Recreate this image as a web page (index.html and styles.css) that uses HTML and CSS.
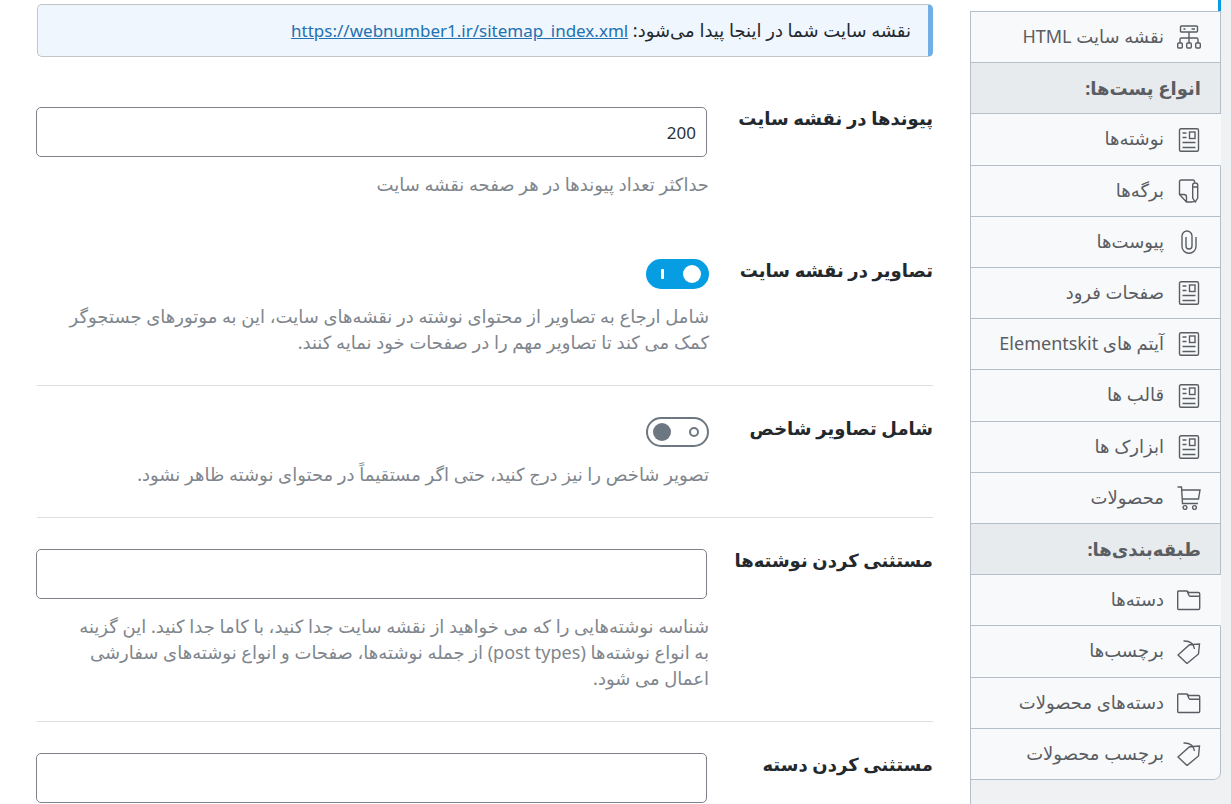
FILE: index.html
```html
<!DOCTYPE html>
<html lang="fa" dir="rtl">
<head>
<meta charset="utf-8">
<meta name="viewport" content="width=device-width, initial-scale=1">
<title>تنظیمات نقشه سایت</title>
<link rel="stylesheet" href="styles.css">
</head>
<body>
<svg class="sprite" aria-hidden="true">
  <symbol id="i-sitemap" viewBox="0 0 24 24"><rect x="3.500" y="1" width="17" height="6" rx="1"/><path d="M6.500 4h2M14.500 4h3.500M12 7v11M3 18v-3.500q0-1.500 1.500-1.500h15q1.500 0 1.500 1.500V18"/><rect x=".7" y="18" width="4.600" height="5" rx="1"/><rect x="9.700" y="18" width="4.600" height="5" rx="1"/><rect x="18.700" y="18" width="4.600" height="5" rx="1"/></symbol>
  <symbol id="i-post" viewBox="0 0 24 24"><rect x="2.500" y=".7" width="19" height="22.600" rx="1.500"/><rect x="12.500" y="4" width="5.500" height="6.500"/><path d="M5.500 5h4M5.500 9.500h4M5.500 14.500h13M5.500 19.500h13"/></symbol>
  <symbol id="i-page" viewBox="0 0 24 24"><path d="M17.500 3.500V2.500Q17.500 1 16 1H4.500q-2 0-2 2v12.500L9.500 23h5.500q1.500 0 2-1M2.500 15.500h4.500q2.500 0 2.500 2.500v5"/><path d="M15.700 6q0-2 2.500-2t2.500 2v13l-2.500 4-2.500-4zM15.700 8h5"/></symbol>
  <symbol id="i-clip" viewBox="0 0 24 24"><path d="M19 7v9.500a7 6.800 0 0 1-14 0V6a5 5 0 0 1 10 0v10a3 3 0 0 1-6 0V7"/></symbol>
  <symbol id="i-cart" viewBox="0 0 24 24"><path d="M.5 1h4l1 16.500h15.500M5 4h18l-1.500 9H5.500"/><circle cx="8" cy="21.500" r="1.900"/><circle cx="17.500" cy="21.500" r="1.900"/></symbol>
  <symbol id="i-folder" viewBox="0 0 24 24"><path d="M1.500 3H10l2 1.500h9.500q1.200 0 1.200 1.200v14.600q0 1.200-1.200 1.200h-20Q.7 21.500.7 20.500V4Q.7 3 1.500 3zM10 3l2 4.500q.3.700 1 .7h9.500"/></symbol>
  <symbol id="i-tag" viewBox="0 0 24 24"><path d="M1 15 12.500 4.800 22.500 4 21.500 14 10 23.500zM6.500 1Q16 .5 17.500 9"/></symbol>
</svg>
<div class="shell">
  <nav class="tabs" aria-label="بخش‌ها">
    <div class="active-tab"></div>
    <div class="tab-list">
      <a class="tab" href="#html"><svg class="icon"><use href="#i-sitemap"/></svg><span>نقشه سایت HTML</span></a>
      <h2 class="tab-heading">انواع پست‌ها:</h2>
      <a class="tab" href="#posts"><svg class="icon"><use href="#i-post"/></svg><span>نوشته‌ها</span></a>
      <a class="tab" href="#pages"><svg class="icon"><use href="#i-page"/></svg><span>برگه‌ها</span></a>
      <a class="tab" href="#media"><svg class="icon"><use href="#i-clip"/></svg><span>پیوست‌ها</span></a>
      <a class="tab" href="#landing"><svg class="icon"><use href="#i-post"/></svg><span>صفحات فرود</span></a>
      <a class="tab" href="#elementskit"><svg class="icon"><use href="#i-post"/></svg><span>آیتم های Elementskit</span></a>
      <a class="tab" href="#templates"><svg class="icon"><use href="#i-post"/></svg><span>قالب ها</span></a>
      <a class="tab" href="#widgets"><svg class="icon"><use href="#i-post"/></svg><span>ابزارک ها</span></a>
      <a class="tab" href="#products"><svg class="icon"><use href="#i-cart"/></svg><span>محصولات</span></a>
      <h2 class="tab-heading">طبقه‌بندی‌ها:</h2>
      <a class="tab" href="#categories"><svg class="icon"><use href="#i-folder"/></svg><span>دسته‌ها</span></a>
      <a class="tab" href="#tags"><svg class="icon"><use href="#i-tag"/></svg><span>برچسب‌ها</span></a>
      <a class="tab" href="#product-cats"><svg class="icon"><use href="#i-folder"/></svg><span>دسته‌های محصولات</span></a>
      <a class="tab" href="#product-tags"><svg class="icon"><use href="#i-tag"/></svg><span>برچسب محصولات</span></a>
    </div>
  </nav>
  <main class="content">
    <p class="notice">نقشه سایت شما در اینجا پیدا می‌شود: <a href="https://webnumber1.ir/sitemap_index.xml" dir="ltr">https://webnumber1.ir/sitemap_index.xml</a></p>
    <form>
      <div class="row row-plain">
        <label class="row-label" for="links">پیوندها در نقشه سایت</label>
        <div class="field">
          <input class="text-input" id="links" type="text" value="200">
          <p class="help">حداکثر تعداد پیوندها در هر صفحه نقشه سایت</p>
        </div>
      </div>
      <div class="row">
        <label class="row-label" for="images">تصاویر در نقشه سایت</label>
        <div class="field">
          <input class="toggle" id="images" type="checkbox" role="switch" checked>
          <p class="help">شامل ارجاع به تصاویر از محتوای نوشته در نقشه‌های سایت، این به موتورهای جستجوگر<br>کمک می کند تا تصاویر مهم را در صفحات خود نمایه کنند.</p>
        </div>
      </div>
      <div class="row">
        <label class="row-label" for="featured">شامل تصاویر شاخص</label>
        <div class="field">
          <input class="toggle" id="featured" type="checkbox" role="switch">
          <p class="help">تصویر شاخص را نیز درج کنید، حتی اگر مستقیماً در محتوای نوشته ظاهر نشود.</p>
        </div>
      </div>
      <div class="row">
        <label class="row-label" for="ex-posts">مستثنی کردن نوشته‌ها</label>
        <div class="field">
          <input class="text-input" id="ex-posts" type="text">
          <p class="help">شناسه نوشته‌هایی را که می خواهید از نقشه سایت جدا کنید، با کاما جدا کنید. این گزینه<br>به انواع نوشته‌ها (post types) از جمله نوشته‌ها، صفحات و انواع نوشته‌های سفارشی<br>اعمال می شود.</p>
        </div>
      </div>
      <div class="row">
        <label class="row-label" for="ex-terms">مستثنی کردن دسته</label>
        <div class="field">
          <input class="text-input" id="ex-terms" type="text">
        </div>
      </div>
    </form>
  </main>
</div>
</body>
</html>
```

FILE: styles.css
```css
*, *::before, *::after { box-sizing: border-box; }

body {
  margin: 0;
  height: 100vh;
  overflow: hidden;
  background: #f0f1f3;
  color: #23282d;
  font-family: "Noto Sans", "DejaVu Sans", sans-serif;
  font-size: 18px;
}

.sprite { position: absolute; width: 0; height: 0; }

.shell {
  display: flex;
  min-height: 100vh;
  padding-right: 10px;
}

.tabs {
  flex: none;
  width: 251px;
  border-left: 1px solid #b5bfc9;
}

.active-tab {
  height: 11px;
  margin-left: -1px;
  background: #fff;
  border-right: 3px solid #069de3;
}

.tab-list {
  border-top: 1px solid #b5bfc9;
  border-bottom-right-radius: 7px;
  overflow: hidden;
}

.tab, .tab-heading {
  display: flex;
  align-items: center;
  gap: 13px;
  margin: 0;
  padding: 13px 19px;
  border-right: 1px solid #b5bfc9;
  border-bottom: 1px solid #b5bfc9;
  background: #f8f9fb;
  color: #5a5d62;
  font-size: 18px;
  line-height: 1.345;
  text-decoration: none;
  white-space: nowrap;
}

.tab { padding: 12px 19px; }
.tab span { padding-bottom: 2px; }
.tab-heading { background: #e8ebee; font-weight: 700; }
.tab-heading + .tab { border-right-color: #f8f9fb; }
.tab:last-child { border-bottom-right-radius: 7px; }

.icon {
  flex: none;
  width: 24px;
  height: 24px;
  fill: none;
  stroke: currentColor;
  stroke-width: 1.4;
}

.content {
  flex: 1;
  min-width: 0;
  padding: 4px 37px 0;
  background: #fff;
}

.notice {
  margin: 0 0 19px;
  padding: 13px 17px;
  border: 1px solid #c3c4c7;
  border-right: 5px solid #72aee6;
  border-radius: 5px;
  background: #f0f6fd;
  line-height: 25px;
}

.notice a { color: #2271b1; font-size: 17px; line-height: 1; }

.row {
  display: grid;
  grid-template-columns: 1fr 3fr;
  padding: 31px 0 30px;
  border-bottom: 1px solid #dcdfe3;
}

.row-plain { border-bottom-color: transparent; }

.row-label {
  font-weight: 700;
  line-height: 22px;
  white-space: nowrap;
}

.field {
  display: flex;
  flex-direction: column;
  align-items: flex-start;
  gap: 14px;
}

.text-input {
  width: calc(100% - 1px);
  height: 50px;
  margin: 0 2px 0 -1px;
  padding: 0 10px;
  border: 1px solid #7e8289;
  border-radius: 5px;
  background: #fff;
  color: #2c3338;
  font: inherit;
  font-size: 17px;
}

.help {
  margin: 0;
  color: #7f868d;
  line-height: 26px;
  white-space: nowrap;
}

.toggle {
  appearance: none;
  display: flex;
  align-items: center;
  justify-content: space-between;
  width: 63px;
  height: 30px;
  margin: 0;
  padding: 0 8px 0 5px;
  border: 2px solid #6c7781;
  border-radius: 15px;
  background: #fff;
}

.toggle::before {
  content: "";
  width: 10px;
  height: 10px;
  border: 2px solid #6c7781;
  border-radius: 50%;
}

.toggle::after {
  content: "";
  width: 18px;
  height: 18px;
  border-radius: 50%;
  background: #6c7781;
}

.toggle:checked {
  padding: 0 6px 0 13px;
  border-color: #069de3;
  background: #069de3;
}

.toggle:checked::before {
  width: 18px;
  height: 18px;
  border: 0;
  background: #fff;
}

.toggle:checked::after {
  width: 3px;
  height: 10px;
  border-radius: 1px;
  background: #fff;
}
```
